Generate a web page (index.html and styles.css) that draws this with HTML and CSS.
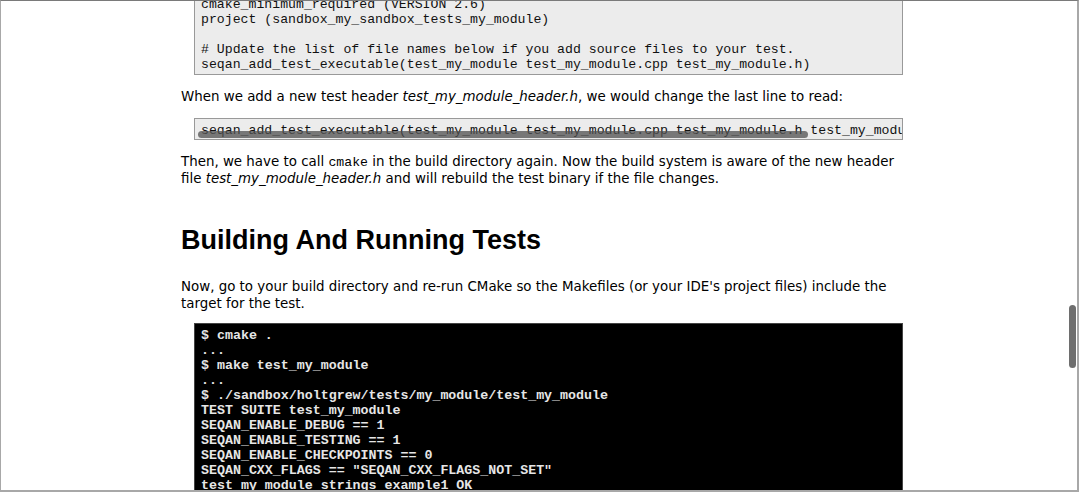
FILE: index.html
```html
<!DOCTYPE html>
<html>
<head>
<meta charset="utf-8">
<link rel="stylesheet" href="styles.css">
</head>
<body>
<div class="window">
  <div class="page">
    <pre class="code light first">cmake_minimum_required (VERSION 2.6)
project (sandbox_my_sandbox_tests_my_module)

# Update the list of file names below if you add source files to your test.
seqan_add_test_executable(test_my_module test_my_module.cpp test_my_module.h)</pre>
    <p>When we add a new test header <em>test_my_module_header.h</em>, we would change the last line to read:</p>
    <div class="code light scroll">
      <pre class="line">seqan_add_test_executable(test_my_module test_my_module.cpp test_my_module.h test_my_module_header.h)</pre>
      <div class="hthumb"></div>
    </div>
    <p>Then, we have to call <code>cmake</code> in the build directory again. Now the build system is aware of the new header file <em>test_my_module_header.h</em> and will rebuild the test binary if the file changes.</p>
    <h2>Building And Running Tests</h2>
    <p class="intro">Now, go to your build directory and re-run CMake so the Makefiles (or your IDE's project files) include the target for the test.</p>
    <pre class="code dark">$ cmake .
...
$ make test_my_module
...
$ ./sandbox/holtgrew/tests/my_module/test_my_module
TEST SUITE test_my_module
SEQAN_ENABLE_DEBUG == 1
SEQAN_ENABLE_TESTING == 1
SEQAN_ENABLE_CHECKPOINTS == 0
SEQAN_CXX_FLAGS == "SEQAN_CXX_FLAGS_NOT_SET"
test_my_module_strings_example1 OK
test_my_module_strings_example2 OK</pre>
  </div>
  <div class="vthumb"></div>
</div>
</body>
</html>
```
FILE: styles.css
```css
html, body {
  margin: 0;
  padding: 0;
  background: #fff;
}
.window {
  position: relative;
  box-sizing: border-box;
  width: 1079px;
  height: 492px;
  border-top: 1px solid #7a7a7a;
  border-left: 1px solid #a8a8a8;
  border-right: 2px solid #a8a8a8;
  border-bottom: 2px solid #a8a8a8;
  overflow: hidden;
}
.page {
  width: 722px;
  margin: -9px 0 0 180px;
  font-family: "DejaVu Sans", Verdana, sans-serif;
  font-size: 13.4px;
  line-height: 17px;
  color: #000;
}
p {
  margin: 13px 0;
}
p.intro {
  margin-bottom: 11px;
}
code {
  font-family: "Liberation Mono", "Courier New", monospace;
  font-size: 13.2px;
  line-height: 1;
}
.code {
  margin: 0 0 0 13px;
  font-family: "Liberation Mono", "Courier New", monospace;
  font-size: 13.2px;
  line-height: 15px;
  border: 1px solid #999;
  padding: 4px 6px;
}
.first {
  padding-bottom: 2px;
}
.light {
  background: #ececec;
  color: #111;
}
.scroll {
  position: relative;
  overflow: hidden;
  padding: 4px 6px 1px;
}
.line {
  margin: 0;
  font: inherit;
  white-space: pre;
}
.hthumb {
  position: absolute;
  left: 3px;
  top: 12px;
  width: 610px;
  height: 7px;
  border-radius: 4px;
  background: rgba(80, 80, 80, 0.75);
}
h2 {
  font-family: "Liberation Sans", Arial, sans-serif;
  font-size: 27px;
  line-height: 32px;
  font-weight: bold;
  margin: 37px 0 22px;
}
.dark {
  background: #000;
  color: #e6e6e6;
  font-size: 13.3px;
  font-weight: bold;
  border-color: #444;
}
.vthumb {
  position: absolute;
  right: 1px;
  top: 304px;
  width: 7px;
  height: 63px;
  border-radius: 4px;
  background: #6e6e6e;
}
```
